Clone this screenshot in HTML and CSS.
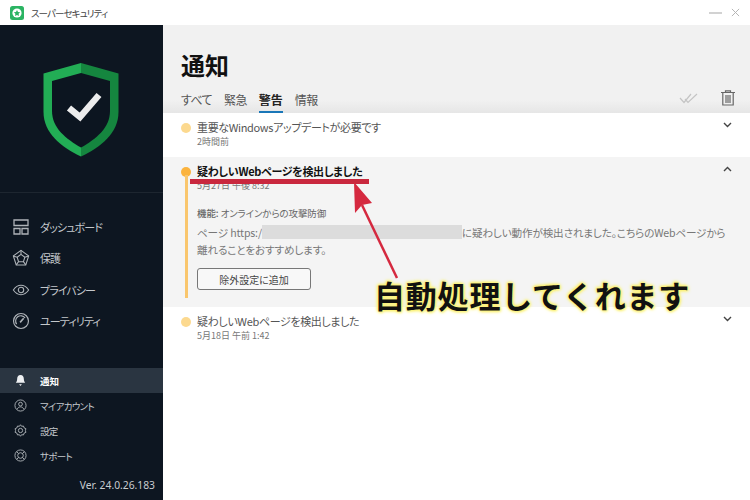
FILE: index.html
```html
<!DOCTYPE html>
<html lang="ja">
<head>
<meta charset="utf-8">
<title>スーパーセキュリティ</title>
<link rel="stylesheet" href="styles.css">
</head>
<body>
<div class="app">
  <header class="titlebar">
    <svg class="app-icon" viewBox="0 0 14 14"><rect width="14" height="14" rx="2.5" fill="#2bb463"/><circle cx="7" cy="7" r="4.6" fill="#fff"/><path d="M7 3.9l1 2.1 2.2.3-1.6 1.5.4 2.2L7 9l-2 1 .4-2.2-1.6-1.5L6 6z" fill="#2bb463"/></svg>
    <span class="app-name">スーパーセキュリティ</span>
    <span class="win-controls">
      <svg width="13" height="12" viewBox="0 0 13 12"><path d="M0 6h13" stroke="#b5b5b5" stroke-width="1.2"/></svg>
      <svg width="9" height="9" viewBox="0 0 10 10"><path d="M1 1l8 8M9 1l-8 8" stroke="#b5b5b5" stroke-width="1.1"/></svg>
    </span>
  </header>
  <div class="body">
    <aside class="sidebar">
      <div class="logo">
        <svg width="78" height="96" viewBox="0 0 78 96">
          <path d="M39 1L1.500 11.500V50C1.500 71 19 85 39 94.500Z" fill="#22ad55"/>
          <path d="M39 1L76.500 11.500V50C76.500 71 59 85 39 94.500Z" fill="#15863f"/>
          <path d="M39 11L10 19V49C10 66 24 77 39 85.500C54 77 68 66 68 49V19Z" fill="#0c1520"/>
          <path d="M27 46l11 9 19-22" fill="none" stroke="#ececec" stroke-width="6.500"/>
        </svg>
      </div>
      <nav class="main-nav">
        <a class="nav-main"><svg class="i" viewBox="0 0 18 18" fill="none" stroke="#aeb3b8" stroke-width="1.300"><path d="M2 2h14v5.500H2zM2 10.500h6V16H2zM10 10.500h6V16h-6z"/></svg>ダッシュボード</a>
        <a class="nav-main"><svg class="i" viewBox="0 0 20 20" fill="none" stroke="#aeb3b8" stroke-width="1.200"><path d="M10 1.500l8.500 6.200-3.200 10H4.700l-3.200-10z"/><path d="M10 6l4.300 3.100-1.600 5H7.300l-1.600-5zM10 1.500V6M18.500 7.700l-4.200 1.400M15.300 17.700l-2.600-3.600M4.700 17.700l2.600-3.600M1.500 7.700l4.200 1.400"/></svg>保護</a>
        <a class="nav-main"><svg class="i" viewBox="0 0 20 20" fill="none" stroke="#aeb3b8" stroke-width="1.200"><path d="M1.500 10C4 6.300 7 4.800 10 4.800s6 1.500 8.500 5.200c-2.500 3.700-5.500 5.200-8.500 5.200S4 13.700 1.500 10z"/><circle cx="10" cy="10" r="3"/></svg>プライバシー</a>
        <a class="nav-main"><svg class="i" viewBox="0 0 20 20" fill="none" stroke="#aeb3b8" stroke-width="1.300"><circle cx="10" cy="10" r="8.300"/><path d="M5.200 13.500A5.800 5.800 0 1 1 14.500 6.500"/><path d="M9 11.500l4-4.500" stroke-width="1.800"/></svg>ユーティリティ</a>
      </nav>
      <nav class="sub-nav">
        <a class="nav-sub active"><svg class="i-s" viewBox="0 0 14 14" fill="#eef0f2"><path d="M7 1c2.600 0 3.600 2 3.600 4.500 0 2 .7 3.200 1.400 4H2c.7-.8 1.400-2 1.400-4C3.400 3 4.400 1 7 1zM5.500 11h3L7 13z"/></svg>通知</a>
        <a class="nav-sub"><svg class="i-s" viewBox="0 0 14 14" fill="none" stroke="#aeb3b8"><circle cx="7" cy="7" r="6"/><circle cx="7" cy="5.500" r="2"/><path d="M3.500 11c.6-1.800 2-2.500 3.500-2.500s2.900.7 3.500 2.500"/></svg>マイアカウント</a>
        <a class="nav-sub"><svg class="i-s" viewBox="0 0 14 14" fill="none" stroke="#aeb3b8"><path d="M7 .8l1.200 1.700 2-.3.7 2 1.900.8-.5 2 .5 2-1.900.8-.7 2-2-.3L7 13.200l-1.200-1.700-2 .3-.7-2-1.900-.8.500-2-.500-2 1.900-.8.700-2 2 .3z"/><circle cx="7" cy="7" r="2.300"/></svg>設定</a>
        <a class="nav-sub"><svg class="i-s" viewBox="0 0 14 14" fill="none" stroke="#aeb3b8"><circle cx="7" cy="7" r="6"/><circle cx="7" cy="7" r="3"/><path d="M2.800 2.800L5 5M11.200 2.800L9 5M2.800 11.200L5 9M11.200 11.200L9 9"/></svg>サポート</a>
      </nav>
      <div class="version">Ver. 24.0.26.183</div>
    </aside>
    <main class="main">
      <section class="head">
        <h1>通知</h1>
        <div class="tabs-row">
          <div class="tabs">
            <span class="tab">すべて</span>
            <span class="tab">緊急</span>
            <span class="tab current">警告</span>
            <span class="tab">情報</span>
          </div>
          <div class="tools">
            <svg width="19" height="11" viewBox="0 0 19 11" fill="none" stroke="#c4c4c4" stroke-width="1.200"><path d="M1 5l4 4.500L12 1M6 6l3 3.500L18 1"/></svg>
            <svg width="14" height="16" viewBox="0 0 14 16" fill="none" stroke="#666" stroke-width="1.200"><path d="M0 2.500h14M4.500 2.500V.8h5v1.700M1.800 2.500V15h10.400V2.500M5 5v8M7 5v8M9 5v8"/></svg>
          </div>
        </div>
      </section>
      <section class="item first">
        <span class="dot pale"></span>
        <div class="item-text">
          <div class="item-title">重要なWindowsアップデートが必要です</div>
          <div class="item-time">2時間前</div>
        </div>
        <svg class="chev" width="9" height="6" viewBox="0 0 9 6" fill="none" stroke="#444" stroke-width="1.400"><path d="M1 1l3.500 3.500L8 1"/></svg>
      </section>
      <section class="item open">
        <span class="dot strong"></span>
        <span class="line"></span>
        <div class="item-text">
          <div class="item-title bold">疑わしいWebページを検出しました</div>
          <div class="item-time">5月27日 午後 8:32</div>
          <div class="feature"><b>機能:</b> オンラインからの攻撃防御</div>
          <p class="desc">ページ https:/<span class="redact"></span>に疑わしい動作が検出されました。こちらのWebページから<br>離れることをおすすめします。</p>
          <button class="btn">除外設定に追加</button>
        </div>
        <svg class="chev" width="9" height="6" viewBox="0 0 9 6" fill="none" stroke="#444" stroke-width="1.400"><path d="M1 5l3.500-3.500L8 5"/></svg>
      </section>
      <section class="item">
        <span class="dot pale"></span>
        <div class="item-text">
          <div class="item-title">疑わしいWebページを検出しました</div>
          <div class="item-time">5月18日 午前 1:42</div>
        </div>
        <svg class="chev" width="9" height="6" viewBox="0 0 9 6" fill="none" stroke="#444" stroke-width="1.400"><path d="M1 1l3.500 3.500L8 1"/></svg>
      </section>
    </main>
  </div>
  <span class="mark-line"></span>
  <svg class="mark-arrow" width="50" height="100" viewBox="0 0 50 100"><path d="M47 96L12 23" stroke="#d5293f" stroke-width="2.500"/><path d="M4 0L22 21 12 23 5 31z" fill="#d5293f"/></svg>
  <div class="callout">自動処理してくれます</div>
</div>
</body>
</html>
```

FILE: styles.css
```css
* { box-sizing: border-box; }
html, body { margin: 0; padding: 0; }
body { width: 750px; height: 500px; overflow: hidden; background: #fff; font-family: "Noto Sans CJK JP", "Noto Sans", sans-serif; font-feature-settings: "palt"; }
.app { position: relative; width: 750px; height: 500px; display: flex; flex-direction: column; }
.titlebar { height: 25px; display: flex; align-items: center; padding: 0 10px 0 10px; background: #fff; }
.app-icon { width: 14px; height: 14px; margin-right: 7px; }
.app-name { font-size: 9.500px; color: #444; letter-spacing: -0.9px; }
.win-controls { margin-left: auto; display: flex; align-items: center; gap: 9px; }
.body { flex: 1; display: flex; min-height: 0; }
.sidebar { flex: none; width: 163px; background: #0d1621; display: flex; flex-direction: column; color: #c4c8cc; }
.logo { height: 168px; padding: 37px 0 0 42px; border-bottom: 1px solid #1d2630; }
.logo svg { display: block; }
.main-nav { display: flex; flex-direction: column; padding-top: 18px; }
.nav-main { height: 31.500px; display: flex; align-items: center; padding-left: 12px; font-size: 11px; gap: 10px; letter-spacing: -0.9px; }
.i { width: 18px; height: 18px; flex: none; }
.sub-nav { display: flex; flex-direction: column; margin-top: 31px; }
.nav-sub { height: 25px; display: flex; align-items: center; padding-left: 14px; font-size: 9.500px; gap: 13px; letter-spacing: -0.7px; }
.nav-sub.active { background: #2a3541; color: #fff; font-weight: 700; letter-spacing: 0; }
.i-s { width: 13px; height: 13px; flex: none; }
.version { margin-top: 10px; padding-right: 8px; text-align: right; font-size: 10.300px; color: #c8ccd0; font-family: "Noto Sans", sans-serif; }
.main { flex: 1; min-width: 0; display: flex; flex-direction: column; background: #fff; }
.head { height: 88px; background-image: linear-gradient(to bottom, #f1f1f1 85%, #e6e6e6 100%); padding: 23px 15px 0 18px; }
h1 { margin: 0; font-size: 24px; line-height: 34px; font-weight: 700; color: #111; }
.tabs-row { display: flex; justify-content: space-between; align-items: flex-start; margin-top: 8px; }
.tabs { display: flex; gap: 12px; }
.tab { font-size: 12px; line-height: 20px; height: 25px; color: #555; letter-spacing: -0.6px; }
.tab.current { color: #222; font-weight: 700; border-bottom: 3px solid #1a77b8; height: 24px; letter-spacing: 0; }
.tools { display: flex; align-items: center; gap: 23px; }
.item { position: relative; display: flex; padding: 7px 18px 0 34px; height: 44px; background: #fff; }
.item.open { height: 150px; background: #f4f4f4; }
.item-text { flex: 1; min-width: 0; }
.dot { position: absolute; left: 18px; top: 10px; width: 10px; height: 10px; border-radius: 50%; }
.dot.pale { background: #fcd98f; }
.dot.strong { background: #fbb33d; }
.line { position: absolute; left: 22px; top: 18px; bottom: 9px; width: 2.500px; background: #f9c66d; }
.item-title { font-size: 11px; line-height: 15px; color: #555; letter-spacing: -0.35px; }
.item-title.bold { font-weight: 700; color: #111; letter-spacing: -0.3px; }
.item-time { font-size: 9px; line-height: 14px; color: #777; }
.feature { margin-top: 13px; font-size: 9.500px; line-height: 14px; color: #666; letter-spacing: -0.1px; }
.feature b { font-weight: 500; }
.desc { margin: 4px 0 0; font-size: 10.600px; line-height: 17px; color: #777; white-space: nowrap; letter-spacing: -0.15px; }
.redact { display: inline-block; vertical-align: -2px; width: 200px; height: 14px; background: #dcdcdc; }
.btn { display: block; margin-top: 10px; width: 114px; height: 22px; padding: 0; border: 1px solid #777; border-radius: 3px; background: #f8f8f8; color: #444; font: 10px "Noto Sans CJK JP", sans-serif; font-feature-settings: "palt"; }
.chev { margin-top: 2px; }
.mark-line { position: absolute; left: 190px; top: 179px; width: 179px; height: 5px; background: #c9283e; }
.mark-arrow { position: absolute; left: 350px; top: 182px; }
.callout { position: absolute; left: 374px; top: 276px; font-size: 31px; line-height: 38px; font-weight: 700; color: #111; letter-spacing: 0.8px; white-space: nowrap; font-feature-settings: normal; text-shadow: 0 0 2px #fbf27a, 0 0 3px #fbf27a, 0 0 4px #fbf27a, 1px 1px 3px #fbf27a, -1px -1px 3px #fbf27a; }
```
